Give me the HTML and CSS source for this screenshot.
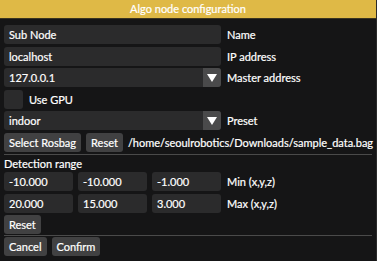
FILE: index.html
```html
<!DOCTYPE html>
<html>
<head>
<meta charset="utf-8">
<link rel="stylesheet" href="styles.css">
</head>
<body>
<div class="window">
  <div class="title">Algo node configuration</div>
  <div class="content">
    <div class="row">
      <div class="field wide">Sub Node</div>
      <span class="label">Name</span>
    </div>
    <div class="row">
      <div class="field wide">localhost</div>
      <span class="label">IP address</span>
    </div>
    <div class="row">
      <div class="field wide combo"><span class="val">127.0.0.1</span><span class="arrow"><svg width="10" height="8" viewBox="0 0 10 8"><polygon points="0,0 10,0 5,8" fill="#fff"/></svg></span></div>
      <span class="label">Master address</span>
    </div>
    <div class="row">
      <div class="check"></div>
      <span class="label gpu">Use GPU</span>
    </div>
    <div class="row">
      <div class="field wide combo"><span class="val">indoor</span><span class="arrow"><svg width="10" height="8" viewBox="0 0 10 8"><polygon points="0,0 10,0 5,8" fill="#fff"/></svg></span></div>
      <span class="label">Preset</span>
    </div>
    <div class="row">
      <div class="btn">Select Rosbag</div>
      <div class="btn">Reset</div>
      <span class="label path">/home/seoulrobotics/Downloads/sample_data.bag</span>
    </div>
    <div class="sep first"></div>
    <div class="row text">Detection range</div>
    <div class="row">
      <div class="field num">-10.000</div>
      <div class="field num">-10.000</div>
      <div class="field num">-1.000</div>
      <span class="label">Min (x,y,z)</span>
    </div>
    <div class="row">
      <div class="field num">20.000</div>
      <div class="field num">15.000</div>
      <div class="field num">3.000</div>
      <span class="label">Max (x,y,z)</span>
    </div>
    <div class="row">
      <div class="btn">Reset</div>
    </div>
    <div class="sep second"></div>
    <div class="row">
      <div class="btn">Cancel</div>
      <div class="btn">Confirm</div>
    </div>
  </div>
</div>
</body>
</html>
```
FILE: styles.css
```css
html, body {
  margin: 0;
  padding: 0;
  background: #141414;
}
.window {
  width: 377px;
  height: 261px;
  background: #151516;
  font-family: "Lato", sans-serif;
  font-size: 11px;
  color: #ffffff;
  -webkit-text-stroke: 0.2px #ffffff;
  box-sizing: border-box;
  border-right: 1px solid #2a2a2a;
  overflow: hidden;
}
.title {
  height: 18px;
  line-height: 18px;
  background: #dfb946;
  text-align: center;
  border-bottom: 1px solid #3a3420;
}
.content {
  padding: 6px 4px 0 4px;
  display: flex;
  flex-direction: column;
  gap: 2.5px;
}
.row {
  display: flex;
  align-items: center;
  gap: 5px;
  height: 19px;
  flex: none;
}
.row.text {
  height: 12px;
}
.field {
  height: 19px;
  line-height: 19px;
  background: #2b2b2c;
  border-radius: 3px;
  padding: 0 5px;
  box-sizing: border-box;
  white-space: nowrap;
}
.wide {
  width: 217px;
}
.num {
  width: 69px;
}
.combo {
  display: flex;
  padding-right: 0;
}
.combo .val {
  flex: 1;
}
.arrow {
  width: 18px;
  height: 19px;
  background: #4a4a4b;
  border-radius: 0 3px 3px 0;
  display: flex;
  align-items: center;
  justify-content: center;
}
.label {
  margin-left: 1px;
  white-space: nowrap;
}
.check {
  width: 19px;
  height: 19px;
  background: #2b2b2c;
  border-radius: 3px;
}
.gpu {
  margin-left: 1px;
}
.btn {
  height: 19px;
  line-height: 19px;
  background: #414142;
  border-radius: 3px;
  padding: 0 5px;
  white-space: nowrap;
}
.path {
  margin-left: 0;
}
.sep {
  height: 1px;
  flex: none;
  background: #4a4a4a;
}
.sep.second {
  margin-top: -2px;
  margin-bottom: -1px;
}
```
